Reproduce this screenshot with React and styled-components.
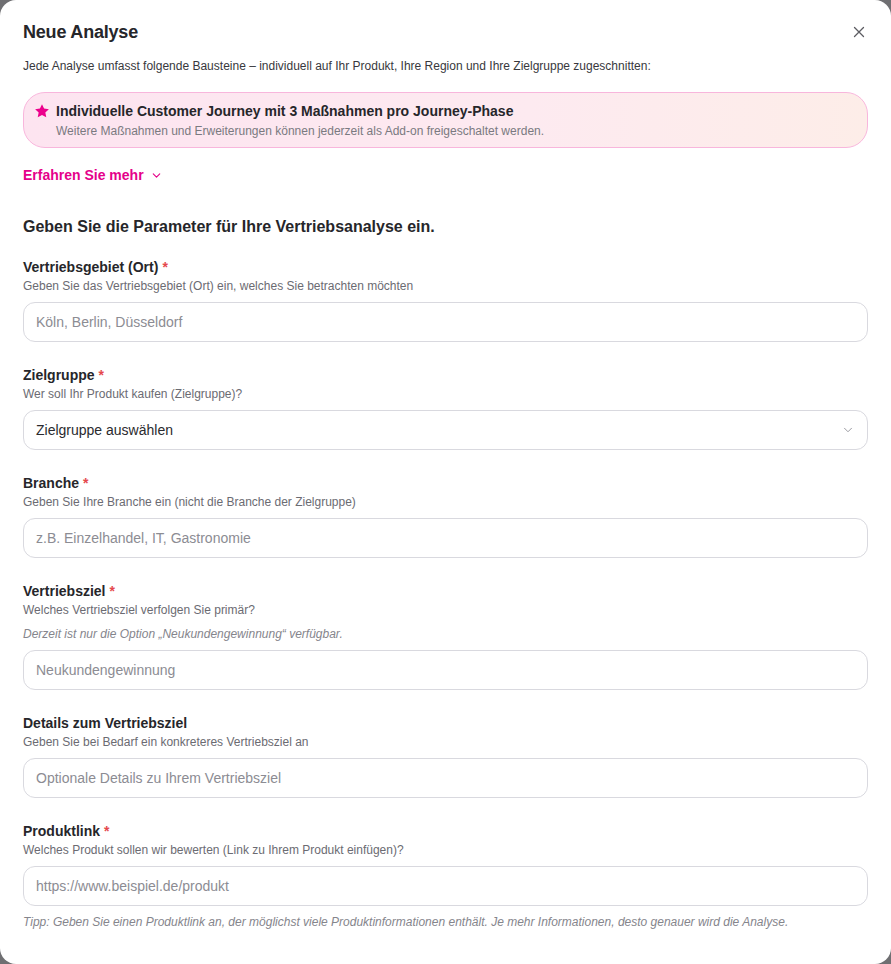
import React from 'react';
import styled, { createGlobalStyle } from 'styled-components';

const GlobalStyle = createGlobalStyle`
	html, body {
		margin: 0;
		padding: 0;
		background: #6f6f72;
	}
	* {
		box-sizing: border-box;
	}
	body {
		font-family: "Liberation Sans", Arial, sans-serif;
		color: #2a2a2e;
	}
`;

const Modal = styled.div`
	background: #ffffff;
	border-radius: 16px;
	height: 964px;
	overflow: hidden;
	padding: 18px 23px 0 23px;
`;

const HeaderRow = styled.div`
	display: flex;
	align-items: center;
	justify-content: space-between;
`;

const Title = styled.h1`
	margin: 0;
	font-size: 18px;
	line-height: 28px;
	font-weight: 700;
	color: #26262a;
	letter-spacing: -0.2px;
`;

const CloseButton = styled.button`
	background: none;
	border: none;
	padding: 0;
	width: 16px;
	height: 16px;
	display: flex;
	align-items: center;
	justify-content: center;
	color: #5c5c62;
	cursor: pointer;
	margin-right: 1px;
`;

const Intro = styled.p`
	margin: 12px 0 0 0;
	font-size: 12px;
	line-height: 16px;
	color: #38383d;
`;

const Highlight = styled.div`
	margin-top: 18px;
	display: flex;
	align-items: flex-start;
	gap: 6px;
	padding: 8px 16px 8px 10px;
	border: 1px solid #f8b6dc;
	border-radius: 22px;
	background: linear-gradient(90deg, #fde4f0 0%, #fdeaf0 60%, #fdede8 100%);
`;

const StarWrap = styled.div`
	width: 16px;
	height: 20px;
	display: flex;
	align-items: center;
	justify-content: center;
	flex-shrink: 0;
`;

const HighlightText = styled.div`
	display: flex;
	flex-direction: column;
	gap: 2px;
`;

const HighlightTitle = styled.div`
	font-size: 14px;
	line-height: 20px;
	font-weight: 700;
	color: #26262a;
`;

const HighlightSub = styled.div`
	font-size: 12px;
	line-height: 16px;
	color: #7a7a80;
`;

const MoreLink = styled.button`
	margin-top: 17px;
	background: none;
	border: none;
	padding: 0;
	display: flex;
	align-items: center;
	gap: 6px;
	font-family: inherit;
	font-size: 14px;
	line-height: 20px;
	font-weight: 600;
	color: #e5008a;
	cursor: pointer;
`;

const SectionTitle = styled.h2`
	margin: 30px 0 0 0;
	font-size: 16px;
	line-height: 24px;
	font-weight: 700;
	color: #26262a;
`;

const Form = styled.div`
	margin-top: 18px;
	display: flex;
	flex-direction: column;
	gap: 23px;
`;

const Field = styled.div`
	display: flex;
	flex-direction: column;
`;

const Label = styled.label`
	font-size: 14px;
	line-height: 20px;
	font-weight: 600;
	color: #26262a;
`;

const Required = styled.span`
	color: #e5484d;
	margin-left: 4px;
`;

const Help = styled.div`
	font-size: 12px;
	line-height: 16px;
	color: #6b6b72;
	margin-top: 1px;
`;

const Note = styled.div`
	font-size: 12px;
	line-height: 16px;
	font-style: italic;
	color: #85858c;
	margin-top: 8px;
`;

const InputBox = styled.div`
	margin-top: 8px;
	height: 40px;
	border: 1px solid #d9d9df;
	border-radius: 12px;
	display: flex;
	align-items: center;
	justify-content: space-between;
	padding: 0 12px;
	font-size: 14px;
	color: ${p => (p.$filled ? '#2a2a2e' : '#8c8c93')};
	background: #ffffff;
`;

const Chevron = ({ size = 12, color = 'currentColor', width = 1.5 }) => (
	<svg width={size} height={size} viewBox="0 0 24 24" fill="none" stroke={color} strokeWidth={width} strokeLinecap="round" strokeLinejoin="round">
		<path d="M6 9l6 6 6-6" />
	</svg>
);

const fields = [
	{ label: 'Vertriebsgebiet (Ort)', required: true, help: 'Geben Sie das Vertriebsgebiet (Ort) ein, welches Sie betrachten möchten', placeholder: 'Köln, Berlin, Düsseldorf' },
	{ label: 'Zielgruppe', required: true, help: 'Wer soll Ihr Produkt kaufen (Zielgruppe)?', placeholder: 'Zielgruppe auswählen', select: true },
	{ label: 'Branche', required: true, help: 'Geben Sie Ihre Branche ein (nicht die Branche der Zielgruppe)', placeholder: 'z.B. Einzelhandel, IT, Gastronomie' },
	{ label: 'Vertriebsziel', required: true, help: 'Welches Vertriebsziel verfolgen Sie primär?', note: 'Derzeit ist nur die Option „Neukundengewinnung“ verfügbar.', placeholder: 'Neukundengewinnung' },
	{ label: 'Details zum Vertriebsziel', help: 'Geben Sie bei Bedarf ein konkreteres Vertriebsziel an', placeholder: 'Optionale Details zu Ihrem Vertriebsziel' },
	{ label: 'Produktlink', required: true, help: 'Welches Produkt sollen wir bewerten (Link zu Ihrem Produkt einfügen)?', placeholder: 'https://www.beispiel.de/produkt', tip: 'Tipp: Geben Sie einen Produktlink an, der möglichst viele Produktinformationen enthält. Je mehr Informationen, desto genauer wird die Analyse.' },
];

const App = () => {
	return (
		<>
			<GlobalStyle />
			<Modal>
				<HeaderRow>
					<Title>Neue Analyse</Title>
					<CloseButton aria-label="Schließen">
						<svg width="12" height="12" viewBox="0 0 12 12" fill="none" stroke="currentColor" strokeWidth="1.3" strokeLinecap="round">
							<path d="M1.5 1.5l9 9M10.5 1.5l-9 9" />
						</svg>
					</CloseButton>
				</HeaderRow>
				<Intro>Jede Analyse umfasst folgende Bausteine – individuell auf Ihr Produkt, Ihre Region und Ihre Zielgruppe zugeschnitten:</Intro>

				<Highlight>
					<StarWrap>
						<svg width="16" height="16" viewBox="0 0 24 24" fill="#ec008c">
							<path d="M12 1.8l3.1 6.6 7.2.9-5.3 5 1.4 7.2L12 18l-6.4 3.5L7 14.3l-5.3-5 7.2-.9z" />
						</svg>
					</StarWrap>
					<HighlightText>
						<HighlightTitle>Individuelle Customer Journey mit 3 Maßnahmen pro Journey-Phase</HighlightTitle>
						<HighlightSub>Weitere Maßnahmen und Erweiterungen können jederzeit als Add-on freigeschaltet werden.</HighlightSub>
					</HighlightText>
				</Highlight>

				<MoreLink>
					Erfahren Sie mehr
					<Chevron size={13} width={2} />
				</MoreLink>

				<SectionTitle>Geben Sie die Parameter für Ihre Vertriebsanalyse ein.</SectionTitle>

				<Form>
					{fields.map(f => (
						<Field key={f.label}>
							<Label>
								{f.label}
								{f.required && <Required>*</Required>}
							</Label>
							<Help>{f.help}</Help>
							{f.note && <Note>{f.note}</Note>}
							<InputBox $filled={f.select}>
								<span>{f.placeholder}</span>
								{f.select && <Chevron size={14} color="#8c8c93" />}
							</InputBox>
							{f.tip && <Note>{f.tip}</Note>}
						</Field>
					))}
				</Form>
			</Modal>
		</>
	);
};

export default App;
